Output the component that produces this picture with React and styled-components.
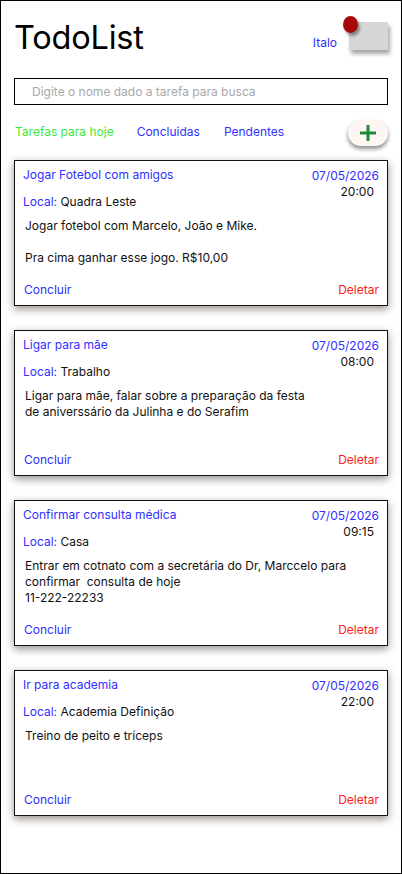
import React from "react";
import styled, { createGlobalStyle } from "styled-components";

const GlobalStyle = createGlobalStyle`
	body {
		margin: 0;
		font-family: Inter, "Noto Sans", sans-serif;
		background: #ffffff;
	}
	* {
		box-sizing: border-box;
	}
`;

const BLUE = "#2f2fff";

// Page frame
const Frame = styled.div`
	width: 402px;
	height: 874px;
	border: 1px solid #000;
	padding: 0 13px;
	overflow: hidden;
`;

const Header = styled.header`
	display: flex;
	justify-content: space-between;
	align-items: flex-start;
	height: 77px;
	padding-top: 17px;
`;

const Title = styled.h1`
	margin: 0;
	font-size: 32.5px;
	line-height: 40px;
	font-weight: 400;
	color: #000;
	letter-spacing: -0.2px;
`;

const User = styled.div`
	display: flex;
	align-items: flex-start;
	gap: 12px;
	margin-top: 4px;
`;

const UserName = styled.span`
	font-size: 12px;
	line-height: 16px;
	color: ${BLUE};
	margin-top: 13px;
`;

// Toggle switch
const Toggle = styled.div`
	position: relative;
	width: 39px;
	height: 28px;
	background: #d6d6d6;
	box-shadow: 2px 4px 4px rgba(0, 0, 0, 0.35);
`;

const Knob = styled.div`
	position: absolute;
	left: -6px;
	top: -6px;
	width: 15px;
	height: 17px;
	border-radius: 50%;
	background: #a80808;
	box-shadow: 2px 3px 3px rgba(0, 0, 0, 0.4);
`;

const Search = styled.input`
	display: block;
	width: 100%;
	height: 27px;
	border: 1.5px solid #000;
	padding: 0 17px;
	font-family: inherit;
	font-size: 12px;
	color: #000;
	outline: none;
	&::placeholder {
		color: #a8a8a8;
	}
`;

const Tabs = styled.nav`
	display: flex;
	align-items: center;
	height: 42px;
	margin-top: 5px;
	padding-left: 1px;
`;

const Tab = styled.span`
	font-size: 12px;
	color: ${(p) => (p.$active ? "#3de83d" : BLUE)};
	margin-right: ${(p) => p.$gap}px;
`;

const AddButton = styled.button`
	margin-left: auto;
	margin-top: 4px;
	width: 40px;
	height: 26px;
	border: none;
	border-radius: 13px;
	background: #fdf6f3;
	box-shadow: 0 3px 4px rgba(0, 0, 0, 0.45);
	display: flex;
	align-items: center;
	justify-content: center;
	padding: 0;
	cursor: pointer;
`;

const List = styled.div`
	display: flex;
	flex-direction: column;
	gap: 24px;
	margin-top: 8px;
`;

const Card = styled.article`
	height: 146px;
	border: 1px solid #111;
	background: #fff;
	box-shadow: 0 3px 8px rgba(60, 50, 40, 0.55);
	padding: 6px 8px 7px 8px;
	display: flex;
	flex-direction: column;
`;

const CardTop = styled.div`
	display: flex;
	justify-content: space-between;
`;

const CardTitle = styled.div`
	font-size: 12px;
	color: ${BLUE};
	line-height: 16px;
`;

const When = styled.div`
	display: flex;
	flex-direction: column;
	align-items: flex-end;
	font-size: 12px;
	line-height: 16px;
	padding-top: 1px;
`;

const DateText = styled.span`
	color: ${BLUE};
`;

const TimeText = styled.span`
	color: #111;
	margin-right: 5px;
`;

const Local = styled.div`
	font-size: 12px;
	line-height: 16px;
	margin-top: 11px;
	color: #111;
	span {
		color: ${BLUE};
	}
`;

const Description = styled.div`
	margin-top: 8px;
	padding-left: 2px;
	font-size: 12px;
	line-height: 16px;
	color: #111;
	p {
		margin: 0 0 16px;
	}
`;

const CardFooter = styled.div`
	margin-top: auto;
	display: flex;
	justify-content: space-between;
	font-size: 12px;
	line-height: 16px;
`;

const Action = styled.span`
	color: ${(p) => (p.$danger ? "#ff2020" : BLUE)};
	margin-left: 1px;
`;

const tasks = [
	{
		title: "Jogar Fotebol com amigos",
		local: "Quadra Leste",
		time: "20:00",
		desc: [["Jogar fotebol com Marcelo, João e Mike."], ["Pra cima ganhar esse jogo. R$10,00"]],
	},
	{
		title: "Ligar para mãe",
		local: "Trabalho",
		time: "08:00",
		desc: [["Ligar para mãe, falar sobre a preparação da festa", "de aniverssário da Julinha e do Serafim"]],
	},
	{
		title: "Confirmar consulta médica",
		local: "Casa",
		time: "09:15",
		desc: [["Entrar em cotnato com a secretária do Dr, Marccelo para", "confirmar\u00a0 consulta de hoje", "11-222-22233"]],
	},
	{
		title: "Ir para academia",
		local: "Academia Definição",
		time: "22:00",
		desc: [["Treino de peito e tríceps"]],
	},
];

const PlusIcon = () => (
	<svg width="18" height="18" viewBox="0 0 18 18">
		<path d="M9 1v16M1 9h16" stroke="#1e8a3c" strokeWidth="3" />
	</svg>
);

const App = () => {
	return (
		<>
			<GlobalStyle />
			<Frame>
				<Header>
					<Title>TodoList</Title>
					<User>
						<UserName>Italo</UserName>
						<Toggle>
							<Knob />
						</Toggle>
					</User>
				</Header>
				<Search placeholder="Digite o nome dado a tarefa para busca" />
				<Tabs>
					<Tab $active $gap={23}>Tarefas para hoje</Tab>
					<Tab $gap={24}>Concluidas</Tab>
					<Tab>Pendentes</Tab>
					<AddButton aria-label="Adicionar">
						<PlusIcon />
					</AddButton>
				</Tabs>
				<List>
					{tasks.map((t) => (
						<Card key={t.title}>
							<CardTop>
								<div>
									<CardTitle>{t.title}</CardTitle>
									<Local>
										<span>Local:</span> {t.local}
									</Local>
								</div>
								<When>
									<DateText>07/05/2026</DateText>
									<TimeText>{t.time}</TimeText>
								</When>
							</CardTop>
							<Description>
								{t.desc.map((para, i) => (
									<p key={i}>
										{para.map((line, j) => (
											<React.Fragment key={j}>
												{line}
												{j < para.length - 1 && <br />}
											</React.Fragment>
										))}
									</p>
								))}
							</Description>
							<CardFooter>
								<Action>Concluir</Action>
								<Action $danger>Deletar</Action>
							</CardFooter>
						</Card>
					))}
				</List>
			</Frame>
		</>
	);
};

export default App;
